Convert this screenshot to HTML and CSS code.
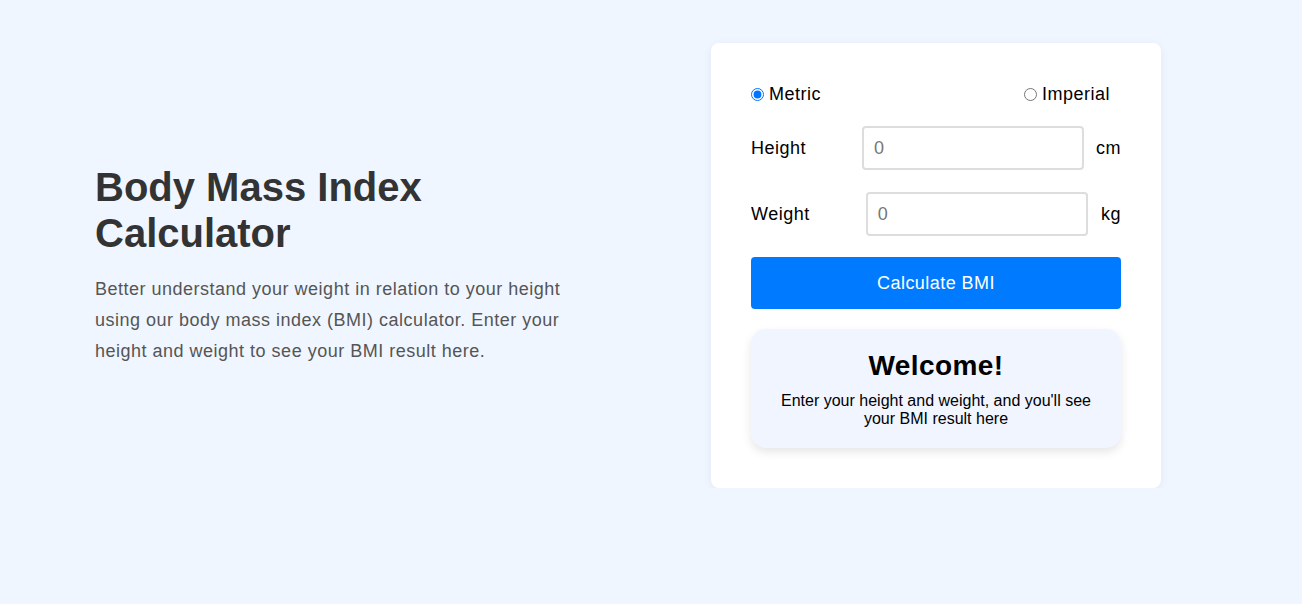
FILE: index.html
```html
<!DOCTYPE html>
<html lang="en">
<head>
<meta charset="utf-8">
<title>BMI Calculator</title>
<link rel="stylesheet" href="styles.css">
</head>
<body>
<main class="page">
  <section class="intro">
    <h1 class="intro-title">Body Mass Index Calculator</h1>
    <p class="intro-text">Better understand your weight in relation to your height using our body mass index (BMI) calculator. Enter your height and weight to see your BMI result here.</p>
  </section>
  <section class="card">
    <div class="units">
      <label class="unit-option"><input type="radio" name="unit" checked> Metric</label>
      <label class="unit-option unit-imperial"><input type="radio" name="unit"> Imperial</label>
    </div>
    <div class="field">
      <label class="field-label">Height</label>
      <input class="field-input" type="text" placeholder="0">
      <span class="field-unit">cm</span>
    </div>
    <div class="field">
      <label class="field-label">Weight</label>
      <input class="field-input" type="text" placeholder="0">
      <span class="field-unit">kg</span>
    </div>
    <button class="calc-btn" type="button">Calculate BMI</button>
    <div class="result">
      <h2 class="result-title">Welcome!</h2>
      <p class="result-text">Enter your height and weight, and you'll see your BMI result here</p>
    </div>
  </section>
</main>
</body>
</html>
```

FILE: styles.css
```css
html, body {
  margin: 0;
  padding: 0;
}
body {
  background: #f0f6ff;
  font-family: "Liberation Sans", Arial, sans-serif;
  color: #000;
}
.page {
  display: flex;
  align-items: center;
  padding: 43px 0 0 95px;
}
.intro {
  width: 480px;
  margin-right: 136px;
}
.intro-title {
  margin: 0 0 17px;
  font-size: 40px;
  line-height: 46.8px;
  font-weight: bold;
  color: #333;
}
.intro-text {
  margin: 0;
  font-size: 18px;
  line-height: 31px;
  letter-spacing: 0.5px;
  color: #555;
}
.card {
  width: 370px;
  padding: 40px;
  background: #fff;
  border-radius: 8px;
  box-shadow: 0 2px 10px rgba(0, 0, 0, 0.06);
}
.units {
  display: flex;
  justify-content: space-between;
  align-items: center;
  height: 20px;
  margin: 1px 0 22px;
  font-size: 18px;
  letter-spacing: 0.5px;
}
.unit-option {
  display: flex;
  align-items: center;
}
.unit-option input {
  width: 13px;
  height: 13px;
  margin: 0 5px 0 0;
}
.unit-imperial {
  margin-right: 11px;
}
.field {
  display: flex;
  align-items: center;
  margin-bottom: 22px;
  font-size: 18px;
  letter-spacing: 0.5px;
}
.field-label {
  margin-right: 56px;
}
.field-input {
  box-sizing: border-box;
  width: 222px;
  height: 44px;
  padding: 0 10px;
  border: 2px solid #ddd;
  border-radius: 4px;
  font-family: inherit;
  font-size: 18px;
  color: #333;
  background: #fff;
}
.field-input::placeholder {
  color: #777;
}
.field-unit {
  margin-left: auto;
}
.calc-btn {
  display: block;
  width: 100%;
  height: 52px;
  margin: -1px 0 20px;
  border: none;
  border-radius: 4px;
  background: #007bff;
  color: #fff;
  font-family: inherit;
  font-size: 18px;
  letter-spacing: 0.45px;
}
.result {
  padding: 20px;
  background: #f0f5ff;
  border-radius: 15px;
  box-shadow: 0 4px 10px rgba(0, 0, 0, 0.1);
  text-align: center;
}
.result-title {
  margin: 0 0 8px;
  font-size: 28px;
  line-height: 1.2;
  font-weight: bold;
  letter-spacing: 0.4px;
}
.result-text {
  margin: 0;
  padding-top: 1px;
  font-size: 16px;
  line-height: 18px;
}
```
